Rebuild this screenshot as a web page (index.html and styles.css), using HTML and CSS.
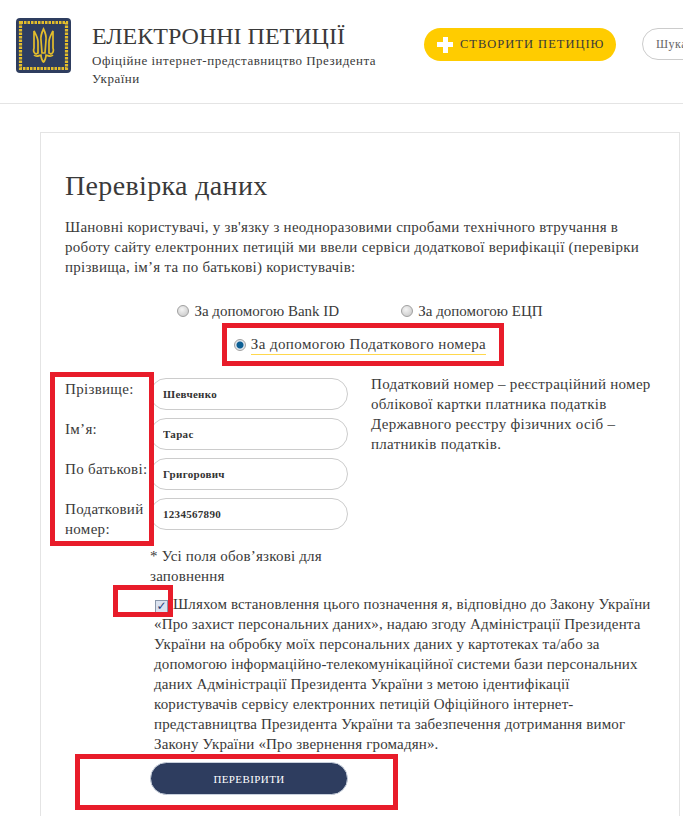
FILE: index.html
```html
<!DOCTYPE html>
<html lang="uk">
<head>
  <meta charset="UTF-8">
  <meta name="viewport" content="width=device-width, initial-scale=1.0">
  <title>Електронні петиції</title>
  <link rel="stylesheet" href="styles.css">
</head>
<body>
  <header class="site-header">
    <svg class="logo" width="55" height="55" viewBox="0 0 55 55">
      <rect width="55" height="55" rx="4" fill="#2e3d5f"/>
      <rect x="4.5" y="4.5" width="46" height="46" fill="none" stroke="#e3bd2c" stroke-width="3.2" stroke-dasharray="2.5 1"/>
      <g fill="none" stroke="#e3bd2c" stroke-width="1.7">
        <path d="M18 13c2 4 4 7 4 11v11l-2 1c-2-1-3-3-2-6z"/>
        <path d="M37 13c-2 4-4 7-4 11v11l2 1c2-1 3-3 2-6z"/>
        <path d="M27.500 11c2 4 3 7 2.500 11l-1 13h-3l-1-13c-.5-4 .5-7 2.500-11z"/>
        <path d="M18 37c3 3 5 0 7 0 0 2 1 6 2.500 7 1.500-1 2.500-5 2.500-7 2 0 4 3 7 0"/>
      </g>
    </svg>
    <div class="site-title">
      <h1>ЕЛЕКТРОННІ ПЕТИЦІЇ</h1>
      <p>Офіційне інтернет-представництво Президента України</p>
    </div>
    <a class="create-btn"><span class="plus"></span>СТВОРИТИ ПЕТИЦІЮ</a>
    <div class="search-box">Шукати</div>
  </header>

  <main class="card">
    <h2>Перевірка даних</h2>
    <p class="intro">Шановні користувачі, у зв'язку з неодноразовими спробами технічного втручання в роботу сайту електронних петицій ми ввели сервіси додаткової верифікації (перевірки прізвища, ім’я та по батькові) користувачів:</p>

    <div class="methods">
      <label class="method"><input type="radio" name="method">За допомогою Bank ID</label>
      <label class="method"><input type="radio" name="method">За допомогою ЕЦП</label>
      <label class="method active"><input type="radio" name="method" checked><span>За допомогою Податкового номера</span></label>
    </div>

    <div class="form-row">
      <div class="fields">
        <label>Прізвище:</label><input class="field" value="Шевченко">
        <label>Ім’я:</label><input class="field" value="Тарас">
        <label>По батькові:</label><input class="field" value="Григорович">
        <label>Податковий номер:</label><input class="field" value="1234567890">
      </div>
      <p class="hint">Податковий номер – реєстраційний номер облікової картки платника податків Державного реєстру фізичних осіб – платників податків.</p>
    </div>

    <p class="required">* Усі поля обов’язкові для заповнення</p>

    <p class="consent"><input type="checkbox" checked>Шляхом встановлення цього позначення я, відповідно до Закону України «Про захист персональних даних», надаю згоду Адміністрації Президента України на обробку моїх персональних даних у картотеках та/або за допомогою інформаційно-телекомунікаційної системи бази персональних даних Адміністрації Президента України з метою ідентифікації користувачів сервісу електронних петицій Офіційного інтернет-представництва Президента України та забезпечення дотримання вимог Закону України «Про звернення громадян».</p>

    <button class="submit-btn">ПЕРЕВІРИТИ</button>
  </main>

  <div class="mark mark-radio"></div>
  <div class="mark mark-labels"></div>
  <div class="mark mark-check"></div>
  <div class="mark mark-submit"></div>
</body>
</html>
```

FILE: styles.css
```css
html, body {
  margin: 0;
  padding: 0;
  height: 816px;
  overflow: hidden;
  background-color: #fff;
  font-family: "Liberation Serif", serif;
  color: #3a3a3a;
}

.site-header {
  display: flex;
  align-items: flex-start;
  height: 104px;
  box-sizing: border-box;
  padding: 18px 0 0 16px;
  border-bottom: 1px solid #e4e4e4;
  overflow: hidden;
}

.logo {
  flex: none;
  margin-right: 21px;
}

.site-title {
  flex: none;
  width: 300px;
}

.site-title h1 {
  margin: 3px 0 0;
  font-size: 24px;
  font-weight: normal;
  line-height: 30px;
}

.site-title p {
  margin: 1px 0 0;
  font-size: 13px;
  line-height: 18px;
  letter-spacing: 0.5px;
}

.create-btn {
  flex: none;
  display: flex;
  align-items: center;
  box-sizing: border-box;
  width: 192px;
  height: 33px;
  margin: 10px 0 0 32px;
  padding-left: 13px;
  border-radius: 17px;
  background-color: #ffcc00;
  font-size: 12.5px;
  letter-spacing: 1px;
}

.plus {
  width: 16px;
  height: 16px;
  margin-right: 7px;
  background:
    linear-gradient(#fff, #fff) center / 16px 5px no-repeat,
    linear-gradient(#fff, #fff) center / 5px 16px no-repeat;
}

.search-box {
  flex: none;
  box-sizing: border-box;
  width: 120px;
  height: 32px;
  margin: 10px 0 0 26px;
  padding-left: 13px;
  border: 1px solid #ccc;
  border-radius: 16px;
  font-size: 12px;
  line-height: 30px;
  letter-spacing: 0.5px;
  color: #666;
}

.card {
  box-sizing: border-box;
  width: 640px;
  height: 720px;
  margin: 28px 0 0 40px;
  padding: 37px 24px 0;
  border: 1px solid #e4e4e4;
}

.card h2 {
  margin: 0;
  font-size: 28px;
  font-weight: normal;
  line-height: 32px;
  letter-spacing: 0.35px;
}

.intro {
  margin: 15px 0 0;
  font-size: 15px;
  line-height: 20px;
  letter-spacing: 0.25px;
}

.methods {
  display: flex;
  flex-wrap: wrap;
  justify-content: center;
  column-gap: 62px;
  row-gap: 13px;
  margin-top: 24px;
  font-size: 15px;
  line-height: 20px;
}

.method {
  display: flex;
  align-items: center;
}

.method.active {
  letter-spacing: 0.4px;
}

.method input {
  appearance: none;
  width: 12px;
  height: 12px;
  margin: 0 5px 0 0;
  border: 1px solid #a0a0a0;
  border-radius: 50%;
  background: radial-gradient(circle at 40% 35%, #f4f4f4, #c4c4c4);
}

.method input:checked {
  background: radial-gradient(circle, #0d5f94 0, #0d5f94 3px, #dfe6ee 4px);
}

.method.active span {
  border-bottom: 1px solid #ffd84d;
}

.form-row {
  display: flex;
  margin-top: 23px;
}

.fields {
  flex: none;
  display: grid;
  grid-template-columns: 85px 198px;
  row-gap: 8px;
  font-size: 15px;
  line-height: 20px;
  letter-spacing: 0.3px;
}

.fields label {
  padding-top: 1px;
}

.field {
  box-sizing: border-box;
  width: 198px;
  height: 32px;
  padding: 0 0 0 12px;
  border: 1px solid #ccc;
  border-radius: 16px;
  font-family: inherit;
  font-size: 11px;
  font-weight: bold;
  letter-spacing: 0.3px;
  color: #333;
}

.hint {
  flex: none;
  width: 285px;
  margin: -4px 0 0 23px;
  font-size: 15px;
  line-height: 20px;
  letter-spacing: 0.3px;
}

.required {
  width: 200px;
  margin: 7px 0 0 85px;
  font-size: 15px;
  line-height: 20px;
  letter-spacing: 0.2px;
}

.consent {
  width: 501px;
  margin: 8px 0 0 89px;
  font-size: 15px;
  line-height: 20px;
  letter-spacing: 0.15px;
}

.consent input {
  appearance: none;
  display: inline-block;
  box-sizing: border-box;
  width: 13px;
  height: 13px;
  margin: 0 5px 0 1px;
  border: 1px solid #8a97aa;
  background-color: #dbe3f0;
  vertical-align: -1px;
  text-align: center;
}

.consent input::before {
  content: "✓";
  display: block;
  font: bold 12px/11px "DejaVu Sans", sans-serif;
  color: #27407a;
}

.submit-btn {
  display: block;
  width: 198px;
  height: 33px;
  margin: 8px 0 0 85px;
  border: 1px solid #c8d0dc;
  border-radius: 17px;
  background-color: #2e3d5f;
  color: #fff;
  font-family: inherit;
  font-size: 11px;
  letter-spacing: 0.4px;
}

/* red annotation frames drawn over the page */
.mark {
  position: absolute;
  box-sizing: border-box;
  border: 5px solid #e81c2a;
}

.mark-radio {
  left: 222px;
  top: 323px;
  width: 282px;
  height: 43px;
}

.mark-labels {
  left: 50px;
  top: 372px;
  width: 104px;
  height: 174px;
}

.mark-check {
  left: 113px;
  top: 585px;
  width: 60px;
  height: 32px;
}

.mark-submit {
  left: 75px;
  top: 754px;
  width: 323px;
  height: 56px;
}
```
